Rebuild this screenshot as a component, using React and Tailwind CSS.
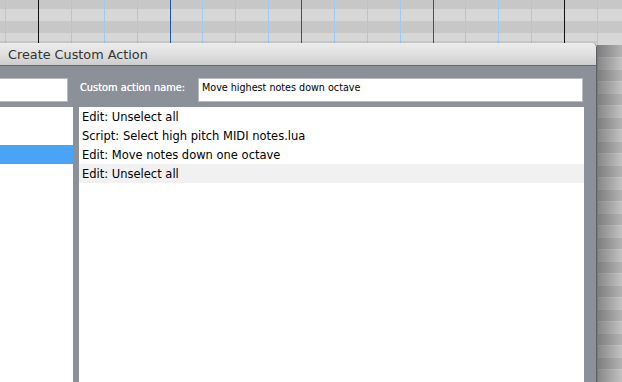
import React from "react";

const gridLines = [
  { x: 5, c: "#9dcbf7" },
  { x: 38, c: "#111111" },
  { x: 71, c: "#9dcbf7" },
  { x: 104, c: "#9dcbf7" },
  { x: 137, c: "#9dcbf7" },
  { x: 170, c: "#1d58a6" },
  { x: 202, c: "#9dcbf7" },
  { x: 235, c: "#9dcbf7" },
  { x: 268, c: "#9dcbf7" },
  { x: 301, c: "#1d58a6" },
  { x: 334, c: "#9dcbf7" },
  { x: 367, c: "#9dcbf7" },
  { x: 400, c: "#9dcbf7" },
  { x: 433, c: "#1d58a6" },
  { x: 465, c: "#9dcbf7" },
  { x: 498, c: "#9dcbf7" },
  { x: 531, c: "#9dcbf7" },
  { x: 564, c: "#111111" },
  { x: 597, c: "#9dcbf7" },
];

const bands = Array.from({ length: 34 }, (_, i) => -3 + i * 12);

const actions = [
  "Edit: Unselect all",
  "Script: Select high pitch MIDI notes.lua",
  "Edit: Move notes down one octave",
  "Edit: Unselect all",
];

// piano roll grid behind the dialog
const PianoRoll = () => (
  <svg width="622" height="382" className="absolute inset-0">
    <defs>
      <linearGradient id="shade" x1="0" x2="1" y1="0" y2="0">
        <stop offset="0" stopColor="#000" stopOpacity="0.38" />
        <stop offset="1" stopColor="#000" stopOpacity="0.1" />
      </linearGradient>
    </defs>
    {bands.map((y, i) => (
      <rect key={y} x="0" y={y} width="622" height="12" fill={i % 2 ? "#d7d7d7" : "#c7c7c7"} />
    ))}
    {bands.map((y) => (
      <rect key={"l" + y} x="597" y={y + 12} width="25" height="1" fill="#e6e6e6" opacity={y > 40 ? 0.6 : 0} />
    ))}
    {gridLines.map((l) => (
      <rect key={l.x} x={l.x} y="0" width="1" height="382" fill={l.c} />
    ))}
    <rect x="597" y="45" width="25" height="337" fill="url(#shade)" />
    <rect x="0" y="41" width="597" height="2" fill="#000" opacity="0.08" />
  </svg>
);

export default function App() {
  return (
    <div className="relative w-[622px] h-[382px] overflow-hidden bg-[#c7c7c7] font-['DejaVu_Sans',sans-serif]">
      <PianoRoll />

      {/* dialog window */}
      <div className="absolute left-0 top-[43px] w-[597px] h-[339px] flex flex-col rounded-tr-[5px] border-r border-[#5c6066] overflow-hidden">
        <div className="h-[23px] shrink-0 bg-gradient-to-b from-[#ececec] via-[#e0e0e0] to-[#cdcdcd] border-b border-[#686868] pl-2 pt-[4px] text-[12.8px] leading-[16px] text-[#333333] whitespace-nowrap">
          Create Custom Action
        </div>

        <div className="flex-1 flex bg-[#8c9199] pt-3 pr-3">
          {/* left column */}
          <div className="w-[73px] flex flex-col gap-[5px]">
            <div className="w-[68px] h-[24px] bg-white border border-l-0 border-[#b8bbc0]" />
            <div className="flex-1 bg-white">
              <div className="h-[19px]" />
              <div className="h-[19px]" />
              <div className="h-[19px] bg-[#4aa4f6]" />
            </div>
          </div>

          {/* right column */}
          <div className="flex-1 ml-[6px] flex flex-col gap-[5px]">
            <div className="h-[24px] flex items-center">
              <span className="w-[119px] pl-[1px] pb-[5px] text-[9.8px] text-white leading-none whitespace-nowrap [text-shadow:0_0_0.4px_#fff]">
                Custom action name:
              </span>
              <div className="flex-1 mr-[1px] h-[24px] bg-white border border-[#b8bbc0] pl-[3px] pt-[3px] text-[9.6px] leading-[12px] text-black whitespace-nowrap">
                Move highest notes down octave
              </div>
            </div>
            <div className="flex-1 bg-white">
              {actions.map((a, i) => (
                <div
                  key={i}
                  className={`h-[19px] pl-[3px] pt-[2px] flex items-center text-[11.5px] text-black whitespace-nowrap ${i === 3 ? "bg-[#f1f1f1]" : ""}`}
                >
                  {a}
                </div>
              ))}
            </div>
          </div>
        </div>
      </div>
    </div>
  );
}
